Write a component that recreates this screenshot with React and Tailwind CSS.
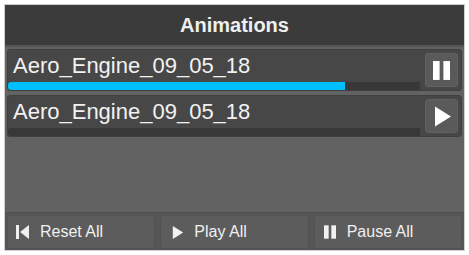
import React from "react";

const font = { fontFamily: '"Liberation Sans", Arial, sans-serif' };

function PauseIcon({ className }) {
  return (
    <svg className={className} viewBox="0 0 18 20" fill="currentColor">
      <rect x="0" y="0" width="7" height="20" />
      <rect x="11" y="0" width="7" height="20" />
    </svg>
  );
}

function PlayIcon({ className }) {
  return (
    <svg className={className} viewBox="0 0 16 20" fill="currentColor">
      <polygon points="0,0 16,10 0,20" />
    </svg>
  );
}

function ResetIcon({ className }) {
  return (
    <svg className={className} viewBox="0 0 13 14" fill="currentColor">
      <rect x="0" y="0" width="3" height="14" />
      <polygon points="13,0 13,14 4,7" />
    </svg>
  );
}

function Row({ progress, playing }) {
  return (
    <div className="flex h-[42px] rounded-[3px] bg-[#474747] border border-[#404040]">
      <div className="flex flex-1 flex-col justify-between">
        <div className="pl-[5px] pt-[5px] text-[22px] leading-[22px] text-[#f2f2f2]">
          Aero_Engine_09_05_18
        </div>
        <div className="h-[8px] w-[412px] bg-[#383838] rounded-l-[3px]">
          {progress > 0 && (
            <div
              className="h-full bg-[#00bfff] rounded-l-[3px]"
              style={{ width: `${progress}%` }}
            />
          )}
        </div>
      </div>
      <div className="flex items-center pr-[3px]">
        <div className="flex h-[34px] w-[33px] items-center justify-center rounded-[3px] bg-[#5a5a5a] border border-[#626262] text-white">
          {playing ? (
            <PauseIcon className="h-[19px] w-[17px]" />
          ) : (
            <PlayIcon className="ml-[2px] h-[21px] w-[16px]" />
          )}
        </div>
      </div>
    </div>
  );
}

function FooterButton({ icon, label }) {
  return (
    <div className="flex h-[34px] items-center rounded-[3px] bg-[#5c5c5c] border border-[#535353] pl-[8px] text-[#f0f0f0]">
      {icon}
      <span className="text-[16px] leading-[16px]">{label}</span>
    </div>
  );
}

export default function App() {
  return (
    <div className="h-[255px] w-[469px] bg-white p-[4px]" style={font}>
      <div className="flex h-[247px] w-[461px] flex-col border border-[#cfcfcf] bg-[#626262]">
        <div className="flex h-[40px] items-center justify-center bg-[#3b3b3b]">
          <span className="text-[20px] font-bold leading-[20px] text-[#efefef]">
            Animations
          </span>
        </div>
        <div className="h-[2px] bg-[#545454]" />
        <div className="flex flex-1 flex-col gap-[4px] px-[2px] pt-[2px]">
          <Row progress={81.7} playing={true} />
          <Row progress={0} playing={false} />
        </div>
        <div className="grid grid-cols-3 gap-[5px] border-t border-[#4e4e4e] bg-[#565656] px-[2px] pt-[2px] pb-[1px]">
          <FooterButton
            icon={<ResetIcon className="mr-[11px] h-[14px] w-[13px]" />}
            label="Reset All"
          />
          <FooterButton
            icon={<PlayIcon className="mr-[10px] ml-[3px] h-[13px] w-[12px]" />}
            label="Play All"
          />
          <FooterButton
            icon={<PauseIcon className="mr-[11px] ml-[1px] h-[14px] w-[12px]" />}
            label="Pause All"
          />
        </div>
      </div>
    </div>
  );
}
